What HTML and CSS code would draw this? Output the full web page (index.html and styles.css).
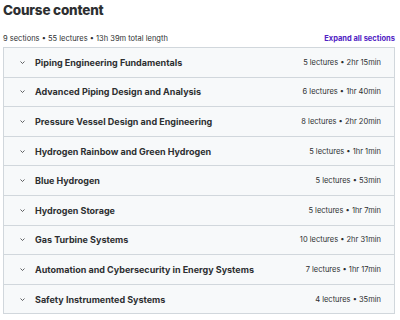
FILE: index.html
```html
<!DOCTYPE html>
<html lang="en">
<head>
    <meta charset="UTF-8">
    <meta name="viewport" content="width=device-width, initial-scale=1.0">
    <title>Course content</title>
    <link rel="stylesheet" href="styles.css">
</head>
<body>
    <h2 class="heading">Course content</h2>
    <div class="summary">
        <span>9 sections • 55 lectures • 13h 39m total length</span>
        <span class="expand">Expand all sections</span>
    </div>
    <div class="sections">
        <div class="section">
            <svg class="chev" viewBox="0 0 10 6"><path d="M1 1l4 4 4-4"/></svg>
            <span class="title">Piping Engineering Fundamentals</span>
            <span class="meta">5 lectures • 2hr 15min</span>
        </div>
        <div class="section">
            <svg class="chev" viewBox="0 0 10 6"><path d="M1 1l4 4 4-4"/></svg>
            <span class="title">Advanced Piping Design and Analysis</span>
            <span class="meta">6 lectures • 1hr 40min</span>
        </div>
        <div class="section">
            <svg class="chev" viewBox="0 0 10 6"><path d="M1 1l4 4 4-4"/></svg>
            <span class="title">Pressure Vessel Design and Engineering</span>
            <span class="meta">8 lectures • 2hr 20min</span>
        </div>
        <div class="section">
            <svg class="chev" viewBox="0 0 10 6"><path d="M1 1l4 4 4-4"/></svg>
            <span class="title">Hydrogen Rainbow and Green Hydrogen</span>
            <span class="meta">5 lectures • 1hr 1min</span>
        </div>
        <div class="section">
            <svg class="chev" viewBox="0 0 10 6"><path d="M1 1l4 4 4-4"/></svg>
            <span class="title">Blue Hydrogen</span>
            <span class="meta">5 lectures • 53min</span>
        </div>
        <div class="section">
            <svg class="chev" viewBox="0 0 10 6"><path d="M1 1l4 4 4-4"/></svg>
            <span class="title">Hydrogen Storage</span>
            <span class="meta">5 lectures • 1hr 7min</span>
        </div>
        <div class="section">
            <svg class="chev" viewBox="0 0 10 6"><path d="M1 1l4 4 4-4"/></svg>
            <span class="title">Gas Turbine Systems</span>
            <span class="meta">10 lectures • 2hr 31min</span>
        </div>
        <div class="section">
            <svg class="chev" viewBox="0 0 10 6"><path d="M1 1l4 4 4-4"/></svg>
            <span class="title">Automation and Cybersecurity in Energy Systems</span>
            <span class="meta">7 lectures • 1hr 17min</span>
        </div>
        <div class="section">
            <svg class="chev" viewBox="0 0 10 6"><path d="M1 1l4 4 4-4"/></svg>
            <span class="title">Safety Instrumented Systems</span>
            <span class="meta">4 lectures • 35min</span>
        </div>
    </div>
</body>
</html>
```
FILE: styles.css
```css
body {
    font-family: Inter, "Noto Sans", sans-serif;
    color: #2d2f31;
    background-color: #ffffff;
    margin: 0;
    padding: 1px 5px 0 3px;
}
.heading {
    font-size: 13.5px;
    font-weight: 800;
    letter-spacing: -0.2px;
    margin: 0;
    line-height: 18px;
}
.summary {
    display: flex;
    justify-content: space-between;
    align-items: center;
    font-size: 7.5px;
    margin-top: 13px;
    height: 12px;
}
.expand {
    color: #5022c3;
    font-weight: 700;
}
.sections {
    margin-top: 3px;
    border: 1px solid #d1d7dc;
}
.section {
    display: flex;
    align-items: center;
    height: 28.6px;
    padding: 0 13px 0 10px;
    background-color: #f7f9fa;
    border-top: 1px solid #d1d7dc;
}
.section:first-child {
    border-top: none;
}
.chev {
    width: 5px;
    height: 3px;
    margin: 0 10px 0 6px;
    fill: none;
    stroke: #2d2f31;
    stroke-width: 1.5;
}
.title {
    flex: 1;
    font-size: 9px;
    font-weight: 700;
}
.meta {
    font-size: 7.5px;
}
```
